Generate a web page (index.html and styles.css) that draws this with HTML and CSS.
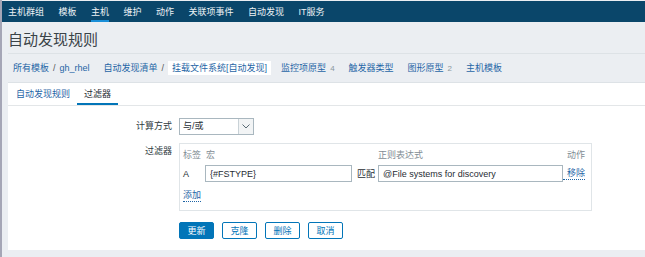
FILE: index.html
```html
<!DOCTYPE html>
<html lang="zh-CN">
<head>
  <meta charset="UTF-8">
  <title>自动发现规则</title>
  <link rel="stylesheet" href="styles.css">
</head>
<body>
<div class="frame">

  <nav class="topnav">
    <a href="#">主机群组</a>
    <a href="#">模板</a>
    <a href="#" class="active">主机</a>
    <a href="#">维护</a>
    <a href="#">动作</a>
    <a href="#">关联项事件</a>
    <a href="#">自动发现</a>
    <a href="#">IT服务</a>
  </nav>

  <div class="main">
    <h1 class="title">自动发现规则</h1>

    <div class="crumbs">
      <div class="crumb-group">
        <a href="#">所有模板</a><span class="sep">/</span><a href="#">gh_rhel</a>
      </div>
      <div class="crumb-group">
        <a href="#">自动发现清单</a><span class="sep">/</span><span class="current">挂载文件系统[自动发现]</span>
      </div>
      <a href="#">监控项原型<span class="count">4</span></a>
      <a href="#">触发器类型</a>
      <a href="#">图形原型<span class="count">2</span></a>
      <a href="#">主机模板</a>
    </div>

    <div class="panel">
      <div class="tabs">
        <a href="#" class="tab">自动发现规则</a>
        <a href="#" class="tab active">过滤器</a>
      </div>

      <form class="form">
        <label class="form-label">计算方式</label>
        <div class="select">
          <span class="select-text">与/或</span>
          <span class="select-btn">
            <svg width="8" height="5" viewBox="0 0 8 5"><path d="M0.5 0.5 L4 4 L7.5 0.5" fill="none" stroke="#5b6b75" stroke-width="1"/></svg>
          </span>
        </div>

        <label class="form-label">过滤器</label>
        <div class="filter-box">
          <div class="filter-grid">
            <span class="th">标签</span>
            <span class="th">宏</span>
            <span></span>
            <span class="th">正则表达式</span>
            <span class="th act">动作</span>

            <span class="cell">A</span>
            <input type="text" class="field macro" value="{#FSTYPE}">
            <span class="cell op">匹配</span>
            <input type="text" class="field regex" value="@File systems for discovery">
            <a href="#" class="link-dotted act">移除</a>
          </div>
          <a href="#" class="link-dotted add">添加</a>
        </div>

        <span></span>
        <div class="buttons">
          <button type="button" class="btn primary">更新</button>
          <button type="button" class="btn">克隆</button>
          <button type="button" class="btn">删除</button>
          <button type="button" class="btn">取消</button>
        </div>
      </form>
    </div>
  </div>

</div>
</body>
</html>
```

FILE: styles.css
```css
body {
  margin: 0;
  font-family: "Liberation Sans", "Noto Sans CJK SC", sans-serif;
  font-size: 9px;
  line-height: 12px;
  color: #1f2c33;
}
a {
  text-decoration: none;
  color: #1f65a6;
}
.frame {
  border-left: 2px solid #a5a6b6;
  background: #ebeef2;
  height: 256px;
  padding-top: 1px;
  overflow: hidden;
}

.topnav {
  display: flex;
  gap: 14.5px;
  height: 21px;
  padding-left: 6px;
  background: #0a466a;
}
.topnav a {
  display: flex;
  align-items: center;
  color: #eef3f6;
}
.topnav a.active {
  box-shadow: inset 0 -2px 0 #1a8fd8;
}

.main {
  padding-left: 6px;
}
.title {
  margin: 0;
  padding: 10px 0 6px;
  font-size: 15px;
  line-height: 15px;
  font-weight: normal;
  color: #3a4348;
  border-bottom: 1px solid #dde2e6;
}

.crumbs {
  display: flex;
  align-items: center;
  gap: 14px;
  height: 28px;
  padding-left: 5px;
  border-bottom: 1px solid #dde2e6;
}
.crumb-group {
  display: flex;
  align-items: center;
}
.sep {
  margin: 0 4px;
  color: #555;
}
.current {
  background: #fff;
  padding: 1px 4px;
  margin-right: -4px;
  color: #1f65a6;
}
.count {
  margin-left: 4px;
  color: #8a979e;
  font-size: 8px;
}

.panel {
  background: #fff;
  padding-bottom: 11px;
}
.tabs {
  display: flex;
  height: 22px;
  padding-left: 1px;
  border-bottom: 1px solid #e3e6e8;
}
.tab {
  display: flex;
  align-items: center;
  padding: 0 7px;
}
.tab.active {
  color: #1f2c33;
  box-shadow: inset 0 -2px 0 #0275b8;
}

.form {
  display: grid;
  grid-template-columns: 164px auto;
  column-gap: 7px;
  row-gap: 8px;
  justify-items: start;
  padding-top: 12px;
}
.form-label {
  justify-self: end;
  line-height: 17px;
  color: #2e3a40;
}

.select {
  display: flex;
  width: 75px;
  height: 17px;
  box-sizing: border-box;
  border: 1px solid #a9b7bf;
}
.select-text {
  flex: 1;
  padding-left: 3px;
  line-height: 15px;
}
.select-btn {
  width: 14px;
  display: flex;
  align-items: center;
  justify-content: center;
  background: #f2f4f5;
  border-left: 1px solid #c9d2d7;
}

.filter-box {
  border: 1px solid #e0e5e8;
  padding: 5px 6px 8px 3px;
}
.filter-grid {
  display: grid;
  grid-template-columns: 22px 147px 26px 185px auto;
  row-gap: 4px;
  align-items: center;
}
.th {
  color: #7f8c94;
}
.th:nth-child(2) {
  padding-left: 1px;
}
.act {
  padding-left: 4px;
}
.op {
  padding-left: 5px;
}
.field {
  height: 17px;
  box-sizing: border-box;
  border: 1px solid #a9b7bf;
  padding: 0 4px;
  font-family: inherit;
  font-size: 9px;
  color: #1f2c33;
  width: 100%;
  margin: 0;
}
.link-dotted {
  border-bottom: 1px dotted #1f65a6;
  line-height: 11px;
}
.add {
  display: inline-block;
  margin-top: 8px;
}

.buttons {
  display: flex;
  gap: 8px;
  margin-top: 3px;
}
.btn {
  width: 35px;
  height: 17px;
  padding: 0;
  font-family: inherit;
  font-size: 9px;
  background: #fff;
  color: #0275b8;
  border: 1px solid #0275b8;
  border-radius: 2px;
}
.btn.primary {
  background: #0275b8;
  color: #fff;
}
```
